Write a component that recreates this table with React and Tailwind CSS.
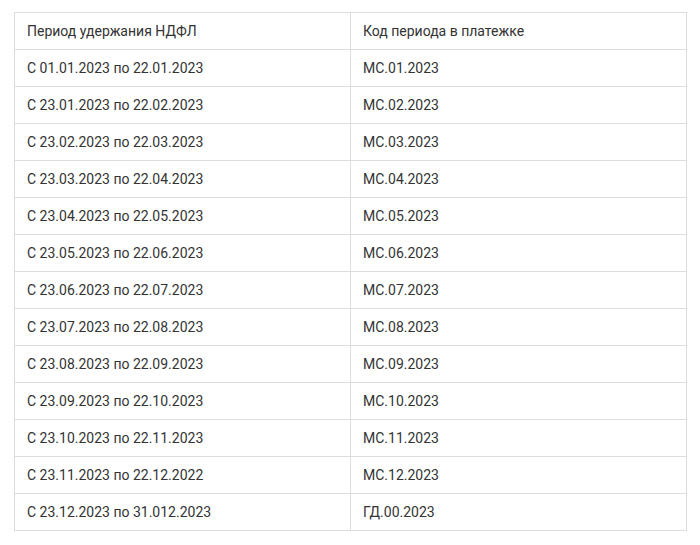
import React from "react";

const rows = [
  ["С 01.01.2023 по 22.01.2023", "МС.01.2023"],
  ["С 23.01.2023 по 22.02.2023", "МС.02.2023"],
  ["С 23.02.2023 по 22.03.2023", "МС.03.2023"],
  ["С 23.03.2023 по 22.04.2023", "МС.04.2023"],
  ["С 23.04.2023 по 22.05.2023", "МС.05.2023"],
  ["С 23.05.2023 по 22.06.2023", "МС.06.2023"],
  ["С 23.06.2023 по 22.07.2023", "МС.07.2023"],
  ["С 23.07.2023 по 22.08.2023", "МС.08.2023"],
  ["С 23.08.2023 по 22.09.2023", "МС.09.2023"],
  ["С 23.09.2023 по 22.10.2023", "МС.10.2023"],
  ["С 23.10.2023 по 22.11.2023", "МС.11.2023"],
  ["С 23.11.2023 по 22.12.2022", "МС.12.2023"],
  ["С 23.12.2023 по 31.012.2023", "ГД.00.2023"],
];

const App = () => {
  return (
    <div className="min-h-screen bg-white pt-[12px] pl-[14px] font-['Roboto',sans-serif] text-[14px] text-[#333]">
      <table className="w-[673px] border-collapse table-fixed">
        <tbody>
          <tr className="h-[37px]">
            <td className="w-[336px] border border-[#ddd] px-3 align-middle">
              Период удержания НДФЛ
            </td>
            <td className="border border-[#ddd] px-3 align-middle">
              Код периода в платежке
            </td>
          </tr>
          {rows.map(([period, code]) => (
            <tr key={period} className="h-[37px]">
              <td className="border border-[#ddd] px-3 align-middle">
                {period}
              </td>
              <td className="border border-[#ddd] px-3 align-middle">{code}</td>
            </tr>
          ))}
        </tbody>
      </table>
    </div>
  );
};

export default App;
